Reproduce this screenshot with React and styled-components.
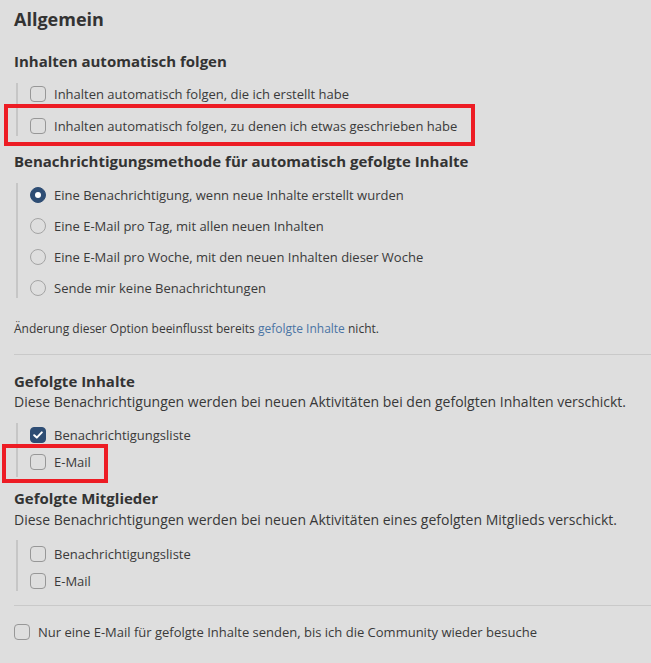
import React from "react";
import styled, { createGlobalStyle } from "styled-components";

const Global = createGlobalStyle`
  html, body { margin: 0; padding: 0; background: #dedede; }
  body { font-family: "Open Sans", "Noto Sans", sans-serif; color: #383838; }
`;

const Page = styled.div`
  position: relative;
  width: 651px;
  height: 663px;
  padding: 7px 0 0 14px;
  box-sizing: border-box;
  overflow: hidden;
`;

const Title = styled.h2`
  margin: 0;
  font-size: 18px;
  line-height: 24px;
  font-weight: 700;
  color: #333;
`;

const Heading = styled.h3`
  margin: ${(p) => p.$mt}px 0 0;
  font-size: 15px;
  line-height: 20px;
  font-weight: 700;
  color: #333;
`;

const Desc = styled.p`
  margin: ${(p) => p.$mt}px 0 0;
  font-size: 14px;
  line-height: 20px;
`;

const Note = styled.p`
  margin: ${(p) => p.$mt}px 0 0;
  font-size: 12px;
  line-height: 18px;
`;

const Link = styled.a`
  color: #4a74a4;
  text-decoration: none;
`;

const Group = styled.div`
  margin: ${(p) => p.$mt}px 0 0 2px;
  border-left: 2px solid #c6c6c6;
  padding: ${(p) => p.$pt}px 0 ${(p) => p.$pb}px 12px;
  display: flex;
  flex-direction: column;
  gap: ${(p) => p.$gap}px;
`;

const Row = styled.label`
  display: flex;
  align-items: center;
  gap: 8px;
  height: 20px;
  font-size: 13px;
  color: #3a3a3a;
  margin-top: ${(p) => p.$mt || 0}px;
`;

const Box = styled.span`
  width: 16px;
  height: 16px;
  box-sizing: border-box;
  border-radius: 4px;
  border: 1px solid ${(p) => (p.$checked ? "#2e4d74" : "#979797")};
  background: ${(p) => (p.$checked ? "#2e4d74" : "transparent")};
  display: flex;
  align-items: center;
  justify-content: center;
  flex: none;
`;

const Radio = styled.span`
  width: 16px;
  height: 16px;
  box-sizing: border-box;
  border-radius: 50%;
  border: 1px solid ${(p) => (p.$checked ? "#2e4d74" : "#a4a4a4")};
  background: ${(p) => (p.$checked ? "#2e4d74" : "transparent")};
  display: flex;
  align-items: center;
  justify-content: center;
  flex: none;
  &::after {
    content: "";
    display: ${(p) => (p.$checked ? "block" : "none")};
    width: 6px;
    height: 6px;
    border-radius: 50%;
    background: #fff;
  }
`;

const Divider = styled.hr`
  margin: ${(p) => p.$mt}px 0 0;
  border: 0;
  border-top: 1px solid #c9c9c9;
  height: 0;
`;

const Highlight = styled.div`
  position: absolute;
  left: ${(p) => p.$x}px;
  top: ${(p) => p.$y}px;
  width: ${(p) => p.$w}px;
  height: ${(p) => p.$h}px;
  border: 4px solid #ed1c24;
  box-sizing: border-box;
  pointer-events: none;
`;

const Check = () => (
  <svg width="10" height="8" viewBox="0 0 10 8">
    <path d="M1.2 4.2 L3.8 6.6 L8.8 1.4" fill="none" stroke="#fff" strokeWidth="2" strokeLinecap="round" strokeLinejoin="round" />
  </svg>
);

const CheckRow = ({ checked, children, mt }) => (
  <Row $mt={mt}>
    <Box $checked={checked}>{checked && <Check />}</Box>
    {children}
  </Row>
);

const RadioRow = ({ checked, children }) => (
  <Row>
    <Radio $checked={checked} />
    {children}
  </Row>
);

export default function App() {
  return (
    <>
      <Global />
      <Page>
        <Title>Allgemein</Title>
        <Heading $mt={20}>Inhalten automatisch folgen</Heading>
        <Group $mt={12} $pt={1} $pb={0} $gap={12}>
          <CheckRow>Inhalten automatisch folgen, die ich erstellt habe</CheckRow>
          <CheckRow>Inhalten automatisch folgen, zu denen ich etwas geschrieben habe</CheckRow>
        </Group>
        <Heading $mt={15}>Benachrichtigungsmethode für automatisch gefolgte Inhalte</Heading>
        <Group $mt={12} $pt={2} $pb={0} $gap={11}>
          <RadioRow checked>Eine Benachrichtigung, wenn neue Inhalte erstellt wurden</RadioRow>
          <RadioRow>Eine E-Mail pro Tag, mit allen neuen Inhalten</RadioRow>
          <RadioRow>Eine E-Mail pro Woche, mit den neuen Inhalten dieser Woche</RadioRow>
          <RadioRow>Sende mir keine Benachrichtungen</RadioRow>
        </Group>
        <Note $mt={22}>
          Änderung dieser Option beeinflusst bereits <Link href="#">gefolgte Inhalte</Link> nicht.
        </Note>
        <Divider $mt={16} />
        <Heading $mt={16}>Gefolgte Inhalte</Heading>
        <Desc $mt={1}>Diese Benachrichtigungen werden bei neuen Aktivitäten bei den gefolgten Inhalten verschickt.</Desc>
        <Group $mt={11} $pt={2} $pb={5} $gap={7}>
          <CheckRow checked>Benachrichtigungsliste</CheckRow>
          <CheckRow>E-Mail</CheckRow>
        </Group>
        <Heading $mt={11}>Gefolgte Mitglieder</Heading>
        <Desc $mt={2}>Diese Benachrichtigungen werden bei neuen Aktivitäten eines gefolgten Mitglieds verschickt.</Desc>
        <Group $mt={10} $pt={4} $pb={0} $gap={7}>
          <CheckRow>Benachrichtigungsliste</CheckRow>
          <CheckRow>E-Mail</CheckRow>
        </Group>
        <Divider $mt={14} />
        <CheckRow mt={16}>Nur eine E-Mail für gefolgte Inhalte senden, bis ich die Community wieder besuche</CheckRow>
        <Highlight $x={4} $y={104} $w={471} $h={42} />
        <Highlight $x={2} $y={444} $w={106} $h={39} />
      </Page>
    </>
  );
}
